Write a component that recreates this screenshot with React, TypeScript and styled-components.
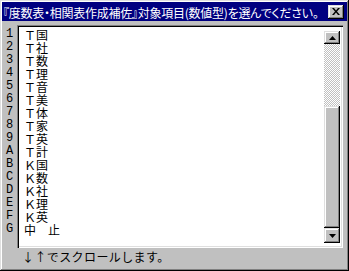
import React from 'react'
import styled, { createGlobalStyle } from 'styled-components'

const GlobalStyle = createGlobalStyle`
  html, body {
    margin: 0;
    padding: 0;
    background: #c0c0c0;
  }
`

const jpFont = `"Noto Sans CJK JP", "Noto Sans", sans-serif`

const raised = `
  box-shadow: inset -1px -1px #000, inset 1px 1px #dfdfdf, inset -2px -2px #808080, inset 2px 2px #fff;
`

const Window = styled.div`
  width: 349px;
  height: 271px;
  box-sizing: border-box;
  padding: 2px;
  background: #c0c0c0;
  display: flex;
  flex-direction: column;
  ${raised}
`

const TitleBar = styled.div`
  height: 19px;
  background: #000080;
  display: flex;
  align-items: center;
  padding-left: 1px;
`

const TitleText = styled.span`
  color: #fff;
  font-family: ${jpFont};
  font-size: 12px;
  line-height: 19px;
  font-feature-settings: 'palt';
  letter-spacing: -0.25px;
  white-space: nowrap;
  padding-top: 1px;
`

const CloseButton = styled.div`
  margin-left: auto;
  margin-right: 3px;
  width: 16px;
  height: 14px;
  background: #c0c0c0;
  display: flex;
  align-items: center;
  justify-content: center;
  ${raised}
`

const Body = styled.div`
  height: 223px;
  margin-top: 4px;
  display: flex;
`

const NumberColumn = styled.div`
  width: 15px;
  padding-top: 3px;
  display: flex;
  flex-direction: column;
`

const RowNumber = styled.div`
  height: 13px;
  line-height: 13px;
  font-family: 'Liberation Mono', monospace;
  font-size: 12px;
  text-align: center;
  color: #000;
`

const ListBox = styled.div`
  width: 326px;
  box-sizing: border-box;
  padding: 2px;
  background: #fff;
  display: flex;
  box-shadow: inset 1px 1px #808080, inset 2px 2px #000, inset -1px -1px #fff, inset -2px -2px #dfdfdf;
`

const Items = styled.div`
  flex: 1;
  padding: 1px 0 0 5px;
  display: flex;
  flex-direction: column;
`

const Item = styled.div`
  height: 13px;
  line-height: 13px;
  font-family: ${jpFont};
  font-size: 12px;
  color: #000;
  white-space: pre;
`

const ScrollBar = styled.div`
  width: 16px;
  margin: 4px 1px 3px 0;
  display: flex;
  flex-direction: column;
`

const ArrowButton = styled.div<{ $h: number }>`
  height: ${({ $h }) => $h}px;
  background: #c0c0c0;
  display: flex;
  align-items: center;
  justify-content: center;
  ${raised}
`

const Track = styled.div`
  height: 62px;
  background: repeating-conic-gradient(#c0c0c0 0% 25%, #fff 0% 50%) 0 0 / 2px 2px;
`

const Thumb = styled.div`
  height: 122px;
  background: #c0c0c0;
  ${raised}
`

const StatusBar = styled.div`
  flex: 1;
  padding-left: 20px;
  font-family: ${jpFont};
  font-size: 12px;
  line-height: 17px;
  letter-spacing: 0.4px;
  color: #000;
`

const Arrow = ({ down }: { down?: boolean }) => (
  <svg width="7" height="4" viewBox="0 0 7 4">
    <path d={down ? 'M0 0h7L3.5 4z' : 'M3.5 0L7 4H0z'} fill="#000" />
  </svg>
)

const rows: [string, string][] = [
  ['1', 'Ｔ国'],
  ['2', 'Ｔ社'],
  ['3', 'Ｔ数'],
  ['4', 'Ｔ理'],
  ['5', 'Ｔ音'],
  ['6', 'Ｔ美'],
  ['7', 'Ｔ体'],
  ['8', 'Ｔ家'],
  ['9', 'Ｔ英'],
  ['A', 'Ｔ計'],
  ['B', 'Ｋ国'],
  ['C', 'Ｋ数'],
  ['D', 'Ｋ社'],
  ['E', 'Ｋ理'],
  ['F', 'Ｋ英'],
  ['G', '中　止'],
]

export default function App() {
  return (
    <>
      <GlobalStyle />
      <Window>
        <TitleBar>
          <TitleText>『度数表・相関表作成補佐』対象項目(数値型)を選んでください。</TitleText>
          <CloseButton>
            <svg width="8" height="7" viewBox="0 0 8 7">
              <path d="M0 0h2l2 2.5L6 0h2L5 3.5 8 7H6L4 4.5 2 7H0l3-3.5z" fill="#000" />
            </svg>
          </CloseButton>
        </TitleBar>
        <Body>
          <NumberColumn>
            {rows.map(([n]) => (
              <RowNumber key={n}>{n}</RowNumber>
            ))}
          </NumberColumn>
          <ListBox>
            <Items>
              {rows.map(([n, label]) => (
                <Item key={n}>{label}</Item>
              ))}
            </Items>
            <ScrollBar>
              <ArrowButton $h={13}>
                <Arrow />
              </ArrowButton>
              <Track />
              <Thumb />
              <ArrowButton $h={15}>
                <Arrow down />
              </ArrowButton>
            </ScrollBar>
          </ListBox>
        </Body>
        <StatusBar>↓↑でスクロールします。</StatusBar>
      </Window>
    </>
  )
}
